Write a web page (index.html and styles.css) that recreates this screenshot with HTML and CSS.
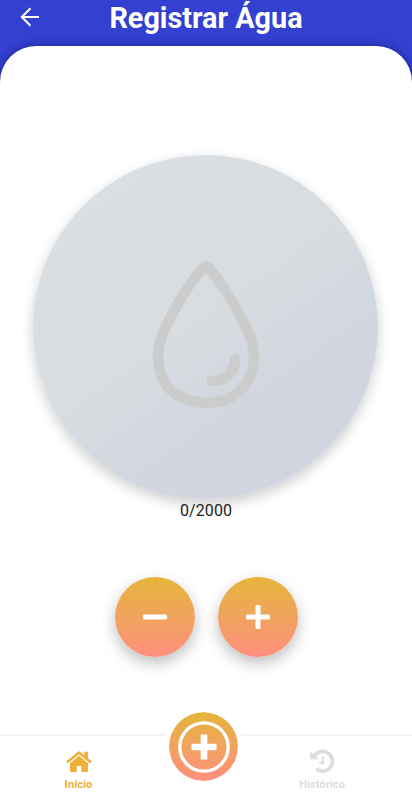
FILE: index.html
```html
<!DOCTYPE html>
<html lang="pt-BR">
<head>
  <meta charset="UTF-8" />
  <meta name="viewport" content="width=device-width, initial-scale=1.0" />
  <title>Registrar Água</title>
  <link rel="stylesheet" href="styles.css">
</head>
<body>
  <div class="app">
    <header class="header">
      <button class="back-btn" aria-label="Voltar">
        <svg width="20" height="20" viewBox="0 0 20 20" fill="none" stroke="#fff" stroke-width="2">
          <path d="M19 10H2M10.500 1.300L1.800 10l8.700 8.700" />
        </svg>
      </button>
      <h1>Registrar Água</h1>
    </header>

    <main class="content">
      <div class="water-circle">
        <svg class="drop" width="108" height="149" viewBox="0 0 108 149" fill="none" stroke="#cccccc" stroke-width="10.400" stroke-linecap="round" stroke-linejoin="round">
          <path d="M51.200 7.600C40 19.500 26 42 17.500 59C11 72 6.100 83 6.100 96C6.100 126 26 142.800 54 142.800S101.900 125 101.900 96C101.900 83 96.500 71 90.500 59.500C81 42 67.500 20.500 56.800 7.600Q54 4.800 51.200 7.600Z" />
          <path d="M83.300 99C82.300 112.500 73 121 59.600 121" />
        </svg>
      </div>
      <p class="amount" id="amount">0/2000</p>

      <div class="actions">
        <button class="round-btn" id="btn-minus" aria-label="Remover">
          <svg width="24" height="24" viewBox="0 0 24 24" fill="#fff">
            <rect x="0" y="9.500" width="24" height="5" rx="1.200" />
          </svg>
        </button>
        <button class="round-btn" id="btn-plus" aria-label="Adicionar">
          <svg width="24" height="24" viewBox="0 0 24 24" fill="#fff">
            <rect x="0" y="9.500" width="24" height="5" rx="1.200" />
            <rect x="9.500" y="0" width="5" height="24" rx="1.200" />
          </svg>
        </button>
      </div>
    </main>

    <nav class="tabs">
      <a class="tab active">
        <svg width="26" height="22" viewBox="0 0 26 22" fill="currentColor">
          <path d="M13 4.800L4 12.300V20q0 1 1 1h5.700v-6h4.600v6H21q1 0 1-1v-7.700z" />
          <path d="M12 .700Q13 0 14 .700l4.300 3.500V1.300q0-.5.500-.5h2.700q.5 0 .5.500v6l3.300 2.700q.4.400.1.800l-.9 1.100q-.4.400-.8.100L13 3.300 2.300 12q-.4.300-.8-.1l-.9-1.100q-.3-.4.100-.8z" />
        </svg>
        <span>Início</span>
      </a>
      <a class="tab-add" aria-label="Adicionar">
        <svg width="52" height="52" viewBox="0 0 52 52">
          <circle cx="26" cy="26" r="24.200" fill="none" stroke="#fff" stroke-width="3.300" />
          <path d="M22.700 13.500h6.600v9.200h9.200v6.600h-9.200v9.200h-6.600v-9.200h-9.200v-6.600h9.200z" fill="#fff" />
        </svg>
      </a>
      <a class="tab">
        <svg width="24" height="24" viewBox="0 0 24 24" fill="none" stroke="currentColor">
          <path d="M4 7.300A9.900 9.900 0 1 1 6.200 19.900" stroke-width="3.800" />
          <path d="M.2 2v8.200h8.400z" fill="currentColor" stroke="none" />
          <path d="M13 7.200v6.600H9.300" stroke-width="2.200" />
        </svg>
        <span>Histórico</span>
      </a>
    </nav>
  </div>

  <script>
    const goal = 2000;
    const step = 200;
    let current = 0;

    function update(value) {
      current = Math.min(goal, Math.max(0, value));
      document.getElementById("amount").textContent = `${current}/${goal}`;
    }

    document.getElementById("btn-minus").addEventListener("click", () => update(current - step));
    document.getElementById("btn-plus").addEventListener("click", () => update(current + step));
  </script>
</body>
</html>
```

FILE: styles.css
```css
* { box-sizing: border-box; margin: 0; padding: 0; }
body {
  font-family: Roboto, sans-serif;
  background: #3340d0;
  color: #222;
}
button {
  border: none;
  background: none;
  cursor: pointer;
}
svg {
  display: block;
}
.app {
  display: flex;
  flex-direction: column;
  height: 100vh;
  overflow: hidden;
}
.header {
  display: grid;
  grid-template-columns: 60px 1fr 60px;
  align-items: center;
  height: 46px;
  padding-bottom: 10px;
  color: #fff;
}
.back-btn {
  justify-self: center;
  margin-top: -3px;
}
.header h1 {
  font-size: 28.800px;
  line-height: 36px;
  font-weight: bold;
  text-align: center;
}
.content {
  flex: 1;
  display: flex;
  flex-direction: column;
  align-items: center;
  padding-top: 109px;
  background: #fff;
  border-radius: 36px 36px 0 0;
  box-shadow: 0 0 8px rgba(0,0,60,0.45);
}
.water-circle {
  display: flex;
  justify-content: center;
  align-items: center;
  width: 345px;
  height: 344px;
  margin-right: 1px;
  padding-top: 15px;
  border-radius: 50%;
  background: linear-gradient(145deg, #dbe0e5 0%, #d6dce0 50%, #d1d6df 70%, #cfd4df 100%);
  box-shadow: 0 5px 13px rgba(0,0,0,0.2);
}
.amount {
  margin-top: 1px;
  font-size: 16px;
  line-height: 21px;
  letter-spacing: 0.1px;
}
.actions {
  display: flex;
  gap: 23px;
  margin-top: 56px;
}
.round-btn {
  display: flex;
  justify-content: center;
  align-items: center;
  width: 80px;
  height: 80px;
  border-radius: 50%;
  background: linear-gradient(#e6b53a, #f0a35e 50%, #ff8f7e);
  box-shadow: 0 6px 15px rgba(0,0,0,0.26);
}
.tabs {
  display: grid;
  grid-template-columns: 157px 93px 144px;
  height: 66px;
  background: #fff;
  border-top: 2px solid #f3f3f3;
}
.tab {
  display: flex;
  flex-direction: column;
  align-items: center;
  justify-content: flex-end;
  gap: 5px;
  padding-bottom: 9px;
  font-size: 11px;
  line-height: 13px;
  letter-spacing: 0.1px;
  font-weight: bold;
  color: #dedede;
}
.tab.active {
  color: #efaf38;
}
.tab-add {
  display: flex;
  justify-content: center;
  align-items: center;
  justify-self: center;
  width: 79px;
  height: 79px;
  margin-top: -29px;
  border: 5px solid #fff;
  border-radius: 50%;
  background: linear-gradient(#e6b53a, #f0a35e 50%, #ff8f7e) padding-box;
}
```
